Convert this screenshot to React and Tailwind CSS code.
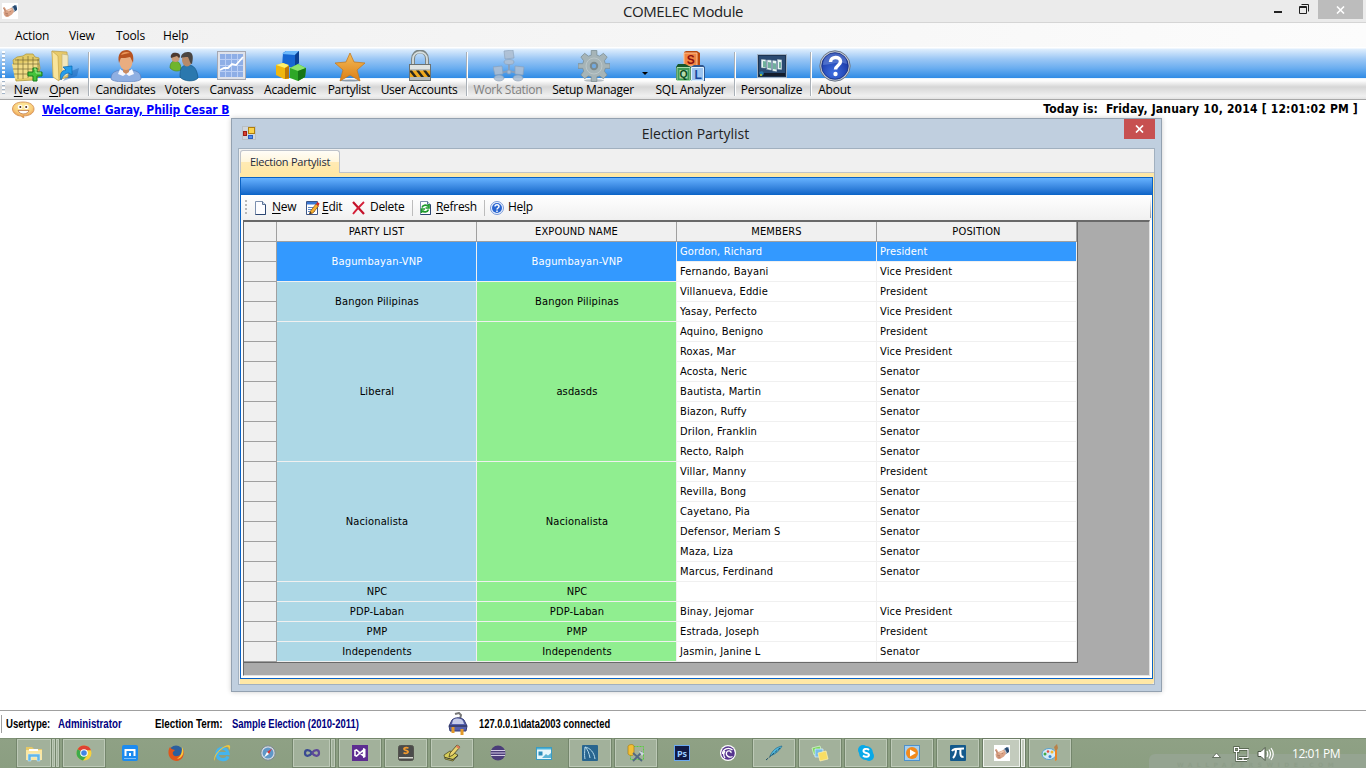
import React from "react";

const svg = (size, children, box = "0 0 32 32") => (
  <svg width={size} height={size} viewBox={box} className="block shrink-0">
    {children}
  </svg>
);

const HandIcon = ({ size = 16 }) =>
  svg(
    size,
    <>
      <rect width="16" height="16" fill="#fff" />
      <path d="M10 4l3-2 2 1 0 4-3 2-2-2z" fill="#27496f" />
      <path d="M13 2l2 1v2z" fill="#7fa3c4" />
      <path d="M9 5l2-1 2 4-2 2z" fill="#b9c6d4" />
      <path d="M1 4.500l1.500-.5L4.500 7 7 6l3-1.500 2 4-2 3-4 2.500H4l-2-2-.5-3 1-1z" fill="#dba487" />
      <path d="M1.500 5l2 3.500M3 10l3 .8M3.500 12l3 .3M6 7.500l3 1" stroke="#a36b54" fill="none" strokeWidth=".7" />
      <path d="M5 7.500l4-2 1 1-3 2z" fill="#f3cdb5" />
    </>,
    "0 0 16 16"
  );

const NewIcon = () =>
  svg(
    32,
    <>
      <path d="M2 10l4-3 6-1 3-2h7l2 3 4 1v4l1 6-2 9-4 3-18 1z" fill="#e2ca66" stroke="#b39a3c" strokeWidth=".8" />
      <path d="M1 14l27-3-2 16-22 2z" fill="#f1dc86" />
      <path d="M2 14h26M2 19h26M3 24h24M7 9v20M12 7v22M17 6v22M22 7v20M27 9v16M4 10h24" stroke="#756a35" strokeWidth=".7" />
      <path d="M22 18h4v4h5v4h-5v5h-4v-5h-5v-4h5z" fill="#45c33b" stroke="#177d1c" />
      <path d="M23 19h2v4h5" fill="none" stroke="#a4ee8f" />
    </>
  );

const OpenIcon = () =>
  svg(
    32,
    <>
      <path d="M20 22l10-4-2 8-14 5z" fill="#1860ae" opacity=".45" />
      <path d="M3 1l15 1 1 25-10 3-4-3z" fill="#e8ca69" stroke="#b99a43" strokeWidth=".7" />
      <path d="M13 4l6 1v20l-6 3z" fill="#f1e7bd" stroke="#b8ab75" strokeWidth=".6" />
      <path d="M3 1l6 5 1 25-6-4z" fill="#f8e49a" stroke="#c6a64c" strokeWidth=".7" />
      <path d="M12 30c-2-6 1-10 5-10l-3-3 9-1 0 9-3-2c-4 0-6 3-8 7z" fill="#249bea" stroke="#0967af" strokeWidth=".7" />
    </>
  );

const CandidateIcon = () =>
  svg(
    32,
    <>
      <path d="M1 29c0-6 3-8 10-9h10c7 1 10 3 10 9-2 4-28 4-30 0z" fill="#8fafe2" stroke="#5f80bb" strokeWidth=".7" />
      <path d="M10 19l6 4 6-4 2 5-5 2-3-2-3 2-5-2z" fill="#f6f8ff" />
      <path d="M13 18h6v4l-3 2-3-2z" fill="#c98a60" />
      <ellipse cx="16" cy="12" rx="6.500" ry="8" fill="#e9ad80" />
      <path d="M9 13c-2-9 2-13 8-13 6 1 7 6 6 13-1-2-2-5-3-6-3 1-7 1-9 1-1 1-1 3-2 5z" fill="#b75320" />
      <path d="M11 5c1-3 6-4 9-2-3 0-5 1-9 2z" fill="#ec995b" />
    </>
  );

const VotersIcon = () =>
  svg(
    32,
    <>
      <path d="M3 18c0-5 2-7 5-7 4 0 6 3 6 9-4 2-8 1-11-2z" fill="#6fb52e" stroke="#4a8718" strokeWidth=".6" />
      <circle cx="8.500" cy="8" r="4" fill="#c99b77" />
      <path d="M4 8c-1-4 2-6 6-5 3 0 4 4 2 5l-2-2c-2 1-4 1-6 2z" fill="#4c3a31" />
      <path d="M13 27c0-8 1-12 8-12 6 0 9 4 10 13-3 4-14 4-18-1z" fill="#2b78ae" stroke="#185985" strokeWidth=".7" />
      <ellipse cx="20" cy="10" rx="5" ry="6.500" fill="#b88a68" />
      <path d="M14 8c0-5 4-6 8-6 5 1 4 7 3 12-2 0-2-3-4-7-3 0-5 0-7 1z" fill="#4a4542" />
    </>
  );

const CanvassIcon = () =>
  svg(
    32,
    <>
      <rect x="1.500" y="1.500" width="28" height="28" fill="#dfe2ea" stroke="#a5a8b2" />
      <rect x="4" y="4" width="23" height="23" fill="#8eaee6" />
      <path d="M4 9.500h23M4 15.500h23M4 21.500h23M9.500 4v23M15.500 4v23M21.500 4v23" stroke="#b9cef5" />
      <path d="M4 20l4-2 4 0 4-4 4 1 7-8" fill="none" stroke="#fff" strokeWidth="1.800" />
    </>
  );

const AcademicIcon = () =>
  svg(
    32,
    <>
      <path d="M8 3l3-2h13v12l-4 4H7z" fill="#1767d2" />
      <path d="M7 4l4-3h13l-4 4z" fill="#6db9fb" />
      <path d="M20 5l4-4v12l-4 3z" fill="#0b4092" />
      <path d="M1 15l7-2 6 3v13H9l-8-4z" fill="#f0b70e" />
      <path d="M1 15l7-2 6 2-4 3z" fill="#fff06b" />
      <path d="M10 18l4-2v12l-4 1z" fill="#bd7906" />
      <path d="M15 18l8-4 8 4-1 9-7 4-8-3z" fill="#2ea727" />
      <path d="M15 18l8-4 8 4-8 3z" fill="#8be36c" />
      <path d="M23 21l8-3-1 9-7 4z" fill="#167516" />
    </>
  );

const StarIcon = () =>
  svg(
    32,
    <>
      <defs>
        <linearGradient id="star" x1="0" y1="0" x2="0" y2="1">
          <stop stopColor="#f3bc59" />
          <stop offset="1" stopColor="#dc7f15" />
        </linearGradient>
      </defs>
      <ellipse cx="16" cy="30.500" rx="10" ry="1" fill="#8d9cab" />
      <path d="M16 3l4 9 11 1-8 7 3 11-10-6-10 6 3-11-8-7 11-1z" fill="url(#star)" stroke="#c77b20" strokeLinejoin="round" strokeWidth=".8" />
    </>
  );

const LockIcon = () =>
  svg(
    32,
    <>
      <path d="M9 15V9c0-10 14-10 14 0v6" fill="none" stroke="#7b8585" strokeWidth="4" />
      <path d="M9 15V9c0-9 14-9 14 0v6" fill="none" stroke="#d5dddd" strokeWidth="1.800" />
      <rect x="5.500" y="14.500" width="21" height="16" fill="#b4baba" stroke="#6c7272" />
      <rect x="6" y="15" width="20" height="4" fill="#dfe3e1" />
      <rect x="6" y="20.500" width="20" height="6.500" fill="#f0a91c" />
      <path d="M6 20.500h2l5 6.500h-3l-4-5zM12 20.500h3l5 6.500h-3zM19 20.500h3l4 5V27h-2z" fill="#27271f" />
    </>
  );

const StationIcon = () =>
  svg(
    32,
    <g fill="#aebfd3" stroke="#8da0b8" strokeWidth=".7">
      <path d="M16 12v10M7 23l9-2 9 2" fill="none" strokeWidth="2" />
      <path d="M11 1l9-1 1 8-9 1z" />
      <ellipse cx="16" cy="12" rx="5" ry="2.500" />
      <path d="M0 17l9-1 1 8-8 1z" />
      <ellipse cx="6" cy="28" rx="5" ry="3" />
      <path d="M22 16l9 1-1 8-8-1z" />
      <ellipse cx="25" cy="28" rx="5" ry="3" />
      <circle cx="16" cy="22" r="2" />
    </g>
  );

const GearIcon = () =>
  svg(
    32,
    <>
      <ellipse cx="16" cy="30.500" rx="10" ry="1.300" fill="#8b98a2" opacity=".6" />
      <path
        d="M13 0h6v5l3 1 4-3 4 4-3 4 1 3h5v5h-5l-1 3 3 4-4 4-4-3-3 1v5h-6v-5l-3-1-4 3-4-4 3-4-1-3H-1v-5h5l1-3-3-4 4-4 4 3 3-1z"
        fill="#a6b4b7"
        stroke="#7b8c91"
        strokeWidth=".8"
        transform="translate(1 .5) scale(.94)"
      />
      <circle cx="16" cy="16" r="8" fill="none" stroke="#bcc7c9" />
      <circle cx="16" cy="16" r="3.200" fill="#72a9df" stroke="#7b898c" strokeWidth="2" />
    </>
  );

const SqlIcon = () =>
  svg(
    32,
    <>
      <path d="M9 2l2-1h11l3 2v13H9z" fill="#b9490d" />
      <path d="M9 3h13v13H9z" fill="#f08542" stroke="#ffc294" />
      <text x="15.500" y="13.500" fontFamily="Liberation Sans, sans-serif" fontWeight="bold" fontSize="12" textAnchor="middle" fill="#8c1010">S</text>
      <path d="M1 17l2-3h7l6 3v13H1z" fill="#17572a" />
      <path d="M2 17.500h13v13H2z" fill="#3f9a58" stroke="#a7dbab" />
      <rect x="4.500" y="20" width="8" height="8.500" fill="#b5dcae" />
      <text x="8.500" y="28" fontFamily="Liberation Sans, sans-serif" fontWeight="bold" fontSize="10.500" textAnchor="middle" fill="#0a4a20">Q</text>
      <path d="M16 17l3-2h9l2 2v14H16z" fill="#31588f" />
      <path d="M16.500 17.500h12v13h-12z" fill="#9cc4f0" stroke="#e0f2ff" />
      <text x="23" y="28.500" fontFamily="Liberation Sans, sans-serif" fontWeight="bold" fontSize="12" textAnchor="middle" fill="#174a9c">L</text>
    </>
  );

const PersonalizeIcon = () =>
  svg(
    32,
    <>
      <rect x="1" y="4" width="30" height="24" fill="#9fb0c3" />
      <rect x="2.500" y="5.500" width="27" height="21" fill="#2b4b72" stroke="#1c3452" />
      <path d="M3 23h26v3H3z" fill="#131c2b" />
      <path d="M5 9l6 .5v9L5 18zM10 9.500l6 .5v10.500l-6-1zM16 10l5 .5v11.500l-5-1zM21 9l5 .5v10.500l-5-.5z" fill="#e8f6f4" stroke="#2b4b72" strokeWidth=".6" />
      <path d="M7 11l3 .5v6l-3-.5zM12 12l3 .5v6l-3-.5zM17 13l3 .5v6l-3-.5zM23 12l2 .3v6l-2-.3z" fill="#6fb09c" />
      <circle cx="5.500" cy="23.500" r="2.200" fill="#267ab0" />
      <path d="M4 24h2v2H4z" fill="#9cb83c" />
    </>
  );

const AboutIcon = () =>
  svg(
    32,
    <>
      <defs>
        <radialGradient id="about" cx=".45" cy=".75" r=".8">
          <stop stopColor="#3f6fe0" />
          <stop offset="1" stopColor="#102a98" />
        </radialGradient>
      </defs>
      <circle cx="16" cy="16" r="15.200" fill="#c3c9d2" stroke="#6b7687" />
      <circle cx="16" cy="16" r="13.300" fill="url(#about)" stroke="#16307f" strokeWidth=".8" />
      <path d="M4 15c0-16 24-15 24-1-8-3-15 0-24 1z" fill="#7898e0" opacity=".5" />
      <path d="M11.500 12c0-6 10-6 10-.5 0 4-5 4-5 8" fill="none" stroke="#fff" strokeWidth="3.500" />
      <circle cx="16.500" cy="24" r="2.200" fill="#fff" />
    </>
  );

const Separator = ({ className }) => (
  <div className={`flex h-[47px] justify-center ${className}`}>
    <div className="mt-1 h-[44px] w-[2px] border-l border-[#a9b0b7] bg-white" />
  </div>
);

const ToolItem = ({ width, label, icon, access, disabled }) => (
  <div className={`flex shrink-0 flex-col items-center ${width}`}>
    <div className={`mt-[2px] ml-px h-8 ${disabled ? "opacity-90" : ""}`}>{icon}</div>
    <div
      className={`h-4 whitespace-nowrap text-[12px] leading-4 ${
        disabled ? "text-[#808080]" : "text-black"
      }`}
    >
      {access ? <span className="underline underline-offset-2">{label[0]}</span> : label[0]}
      {label.slice(1)}
    </div>
  </div>
);

const MainToolbar = () => (
  <div className="flex h-[53px] flex-col border-b border-[#a8a8a8] bg-white font-['Open_Sans',sans-serif] tracking-[-0.27px]">
    <div className="flex h-[52px] bg-[linear-gradient(180deg,#fff_0,#fff_1px,#dfeefd_2px,#9bc7f5_12px,#6caef0_21px,#308be5_31px,#dcecfd_31px,#fff_32px,#fbfbfb_34px,#d6d6d6_40px,#f0f0f0_49px,#e2e2e2_52px)]">
      <div className="flex w-[7px] justify-center pt-[4px]">
        <div className="h-11 w-[3px] bg-[repeating-linear-gradient(180deg,#fff_0,#fff_2px,#a2b4c8_2px,#a2b4c8_3px,transparent_3px,transparent_4px)]" />
      </div>
      <div className="flex pt-px">
        <ToolItem width="w-[38px]" label="New" access icon={<NewIcon />} />
        <ToolItem width="w-[38px]" label="Open" access icon={<OpenIcon />} />
        <Separator className="w-3" />
        <ToolItem width="w-[61px]" label="Candidates" icon={<CandidateIcon />} />
        <ToolItem width="w-[52px]" label="Voters" icon={<VotersIcon />} />
        <ToolItem width="w-[47px]" label="Canvass" icon={<CanvassIcon />} />
        <ToolItem width="w-[70px]" label="Academic" icon={<AcademicIcon />} />
        <ToolItem width="w-[48px]" label="Partylist" icon={<StarIcon />} />
        <ToolItem width="w-[92px]" label="User Accounts" icon={<LockIcon />} />
        <Separator className="w-1" />
        <ToolItem width="w-[78px]" label="Work Station" disabled icon={<StationIcon />} />
        <ToolItem width="w-[92px]" label="Setup Manager" icon={<GearIcon />} />
        <div className="flex w-3 justify-center pt-[24px]">
          <div className="h-0 w-0 border-x-[3px] border-t-[3px] border-x-transparent border-t-black" />
        </div>
        <ToolItem width="w-[79px]" label="SQL Analyzer" icon={<SqlIcon />} />
        <Separator className="w-[10px]" />
        <ToolItem width="w-[63px]" label="Personalize" icon={<PersonalizeIcon />} />
        <Separator className="w-4" />
        <ToolItem width="w-[31px]" label="About" icon={<AboutIcon />} />
      </div>
    </div>
  </div>
);

const TitleBar = () => (
  <div className="flex h-[23px] items-start border-b border-[#d5d5d5] bg-[#ebebeb]">
    <div className="w-[98px] pt-[3px] pl-[2px]">
      <HandIcon />
    </div>
    <div className="flex-1 text-center font-['Open_Sans',sans-serif] text-[15px] leading-[22px] tracking-[-0.38px] text-[#222]">
      COMELEC Module
    </div>
    <div className="flex w-[98px]">
      <div className="mt-[11px] ml-[6px] h-[2px] w-2 bg-[#222]" />
      <svg width="11" height="11" className="mt-1 ml-[17px]">
        <path d="M.5 2.500h7v7h-7zM0 3.500h8M2.500 .5h7v7" fill="none" stroke="#222" />
      </svg>
      <div className="ml-[8px] flex h-[19px] w-[45px] items-center justify-center bg-[#bcbcbc]">
        <svg width="9" height="8">
          <path d="M1 .5l7 7M8 .5l-7 7" stroke="#fff" strokeWidth="1.600" />
        </svg>
      </div>
    </div>
  </div>
);

const MenuBar = () => (
  <div className="flex h-6 items-center bg-linear-to-r from-[#f0f0f0] to-[#fcfcfc] pt-[2px] pl-[15px] font-['Open_Sans',sans-serif] text-[12px] tracking-[-0.15px] text-black">
    <div className="w-[54px]">Action</div>
    <div className="w-[47px]">View</div>
    <div className="w-[47px]">Tools</div>
    <div>Help</div>
  </div>
);

const SmileyIcon = () => (
  <svg width="23" height="18" viewBox="0 0 23 18" className="block">
    <defs>
      <radialGradient id="smile" cx=".5" cy=".3" r=".7">
        <stop stopColor="#fff0a6" />
        <stop offset=".6" stopColor="#f9cf7c" />
        <stop offset="1" stopColor="#e8924c" />
      </radialGradient>
    </defs>
    <path d="M11 2C4 2 .5 5 .5 9c0 4 4.500 7 8.500 7 0 0 1 1.500 3 1.500l-1-1.500c7 0 11-3 11-7C22 5 18 2 11 2z" fill="url(#smile)" stroke="#cf8a4c" strokeWidth=".8" />
    <circle cx="8" cy="7" r="2.300" fill="#fff" />
    <circle cx="14.500" cy="7" r="2.300" fill="#fff" />
    <circle cx="8.300" cy="7" r="1" fill="#4a2b1a" />
    <circle cx="14.200" cy="7" r="1" fill="#4a2b1a" />
    <path d="M6 10.500h11c-1 4-9 5-11 0z" fill="#fff" stroke="#b5683a" strokeWidth=".7" />
  </svg>
);

const FormIcon = () => (
  <svg width="14" height="14" className="block">
    <rect x=".5" y=".5" width="13" height="13" fill="#cfd6dc" stroke="#b9bfc5" />
    <rect x="1.500" y="5.500" width="3" height="4" fill="#d8402e" stroke="#9c1d14" />
    <rect x="6.500" y="1.500" width="6" height="6" fill="#fbd34c" stroke="#b07f0d" />
    <rect x="6.500" y="9.500" width="4" height="3" fill="#4d8df0" stroke="#2b5fc0" />
  </svg>
);

const PageIcon = ({ children }) => (
  <svg width="15" height="16" viewBox="0 0 15 16" className="block shrink-0">
    <path d="M2.500 1.500h7l3 3v10h-10z" fill="#fdfdff" stroke="#7b8fae" />
    <path d="M12.500 4.500v10h-10" fill="none" stroke="#2c4672" />
    <path d="M9.500 1.500v3h3" fill="#cdd9ea" stroke="#5c7396" />
    {children}
  </svg>
);

const EditIcon = () => (
  <svg width="15" height="16" viewBox="0 0 15 16" className="block">
    <path d="M1.500 1.500h11v13h-11z" fill="#fff" stroke="#3c5688" />
    <path d="M2 2h10v2.500H2z" fill="#3a77d2" />
    <path d="M3 7.500h6M3 9.500h4M3 11.500h7" stroke="#5b86c4" />
    <path d="M5.500 11l5.500-7 2.500 2-5.500 7-3.500 1z" fill="#f6b030" stroke="#8a4d12" strokeWidth=".7" />
    <path d="M5 12l2 1-2.500 1z" fill="#222" />
    <path d="M11 4l1.500-2 2 1.500-1 2.500z" fill="#d52b24" />
  </svg>
);

const RefreshIcon = () => (
  <PageIcon>
    <path d="M4 7.500c1-3 5-3 6-1M11 4v4H7.500M10.500 9.500c-1 3-5 3-6 1M3.500 13V9H7" fill="none" stroke="#1c9a2b" strokeWidth="1.700" />
  </PageIcon>
);

const DialogTool = ({ width, icon, before = "", letter, after, gap }) => (
  <div className={`flex items-center ${width}`}>
    {icon}
    <span className={`-mt-px whitespace-nowrap ${gap}`}>
      {before}
      {letter && <span className="underline underline-offset-2">{letter}</span>}
      {after}
    </span>
  </div>
);

const DialogToolbar = () => (
  <div className="flex h-[25px] items-center bg-linear-to-b from-white to-[#f0f0f0] pl-[4px] font-['Open_Sans',sans-serif] text-[12px] tracking-[-0.3px] text-black">
    <div className="mr-[6px] h-4 w-[2px] bg-[repeating-linear-gradient(180deg,#b8b8b8_0,#b8b8b8_2px,transparent_2px,transparent_4px)]" />
    <DialogTool width="w-[52px]" icon={<PageIcon />} letter="N" after="ew" gap="ml-[4px]" />
    <DialogTool width="w-[47px]" icon={<EditIcon />} letter="E" after="dit" gap="ml-[2px]" />
    <DialogTool
      width="w-[60px]"
      gap="ml-[5px]"
      after="Delete"
      icon={
        <svg width="13" height="14" className="block">
          <path d="M1 1l11 12" stroke="#c41129" strokeWidth="2.200" />
          <path d="M12 1C8 5 4 9 1 13" fill="none" stroke="#d41f38" strokeWidth="1.800" />
        </svg>
      }
    />
    <div className="mr-[5px] h-4 w-px bg-[#bcbcbc]" />
    <DialogTool width="w-[65px]" icon={<RefreshIcon />} letter="R" after="efresh" gap="ml-[3px]" />
    <div className="ml-px mr-[5px] h-4 w-px bg-[#bcbcbc]" />
    <DialogTool
      width="w-[50px]"
      gap="ml-[4px]"
      before="He"
      letter="l"
      after="p"
      icon={
        <svg width="14" height="14" viewBox="0 0 14 14" className="block">
          <circle cx="7" cy="7" r="6.500" fill="#eef4ff" stroke="#7999d6" />
          <circle cx="7" cy="7" r="5" fill="#2a66d0" />
          <path d="M5 5.500c0-2.500 4-2.500 4 0 0 1.500-2 1.500-2 3M7 9.500V11" fill="none" stroke="#fff" strokeWidth="1.500" />
        </svg>
      }
    />
    <div className="mr-px ml-auto h-[21px] w-px bg-linear-to-b from-white to-[#9a9a9a]" />
  </div>
);

const parties = [
  { name: "Bagumbayan-VNP", expound: "Bagumbayan-VNP", span: "row-span-2", selected: true, members: [["Gordon, Richard", "President"], ["Fernando, Bayani", "Vice President"]] },
  { name: "Bangon Pilipinas", expound: "Bangon Pilipinas", span: "row-span-2", members: [["Villanueva, Eddie", "President"], ["Yasay, Perfecto", "Vice President"]] },
  {
    name: "Liberal",
    expound: "asdasds",
    span: "row-span-7",
    members: [
      ["Aquino, Benigno", "President"],
      ["Roxas, Mar", "Vice President"],
      ["Acosta, Neric", "Senator"],
      ["Bautista, Martin", "Senator"],
      ["Biazon, Ruffy", "Senator"],
      ["Drilon, Franklin", "Senator"],
      ["Recto, Ralph", "Senator"],
    ],
  },
  {
    name: "Nacionalista",
    expound: "Nacionalista",
    span: "row-span-6",
    members: [
      ["Villar, Manny", "President"],
      ["Revilla, Bong", "Senator"],
      ["Cayetano, Pia", "Senator"],
      ["Defensor, Meriam S", "Senator"],
      ["Maza, Liza", "Senator"],
      ["Marcus, Ferdinand", "Senator"],
    ],
  },
  { name: "NPC", expound: "NPC", span: "row-span-1", members: [["", ""]] },
  { name: "PDP-Laban", expound: "PDP-Laban", span: "row-span-1", members: [["Binay, Jejomar", "Vice President"]] },
  { name: "PMP", expound: "PMP", span: "row-span-1", members: [["Estrada, Joseph", "President"]] },
  { name: "Independents", expound: "Independents", span: "row-span-1", members: [["Jasmin, Janine L", "Senator"]] },
];

const PartyRows = ({ party }) =>
  party.members.map(([member, position], i) => {
    const active = party.selected && i === 0;
    const cell = active ? "bg-[#3399ff] text-white" : "bg-white text-black";
    return (
      <React.Fragment key={i}>
        <div className="border-r border-b border-[#a0a0a0] bg-[#f0f0f0]" />
        {i === 0 && (
          <>
            <div className={`flex items-center justify-center border-r border-b border-[#f0f0f0] pt-px pl-px leading-[18px] ${party.span} ${party.selected ? "bg-[#3399ff] text-white" : "bg-[#add8e6] text-black"}`}>
              {party.name}
            </div>
            <div className={`flex items-center justify-center border-r border-b border-[#f0f0f0] pt-px pl-px leading-[18px] ${party.span} ${party.selected ? "bg-[#3399ff] text-white" : "bg-[#90ee90] text-black"}`}>
              {party.expound}
            </div>
          </>
        )}
        <div className={`border-r border-b border-[#f0f0f0] pl-[3px] leading-[19px] ${cell}`}>{member}</div>
        <div className={`border-r border-b border-[#f0f0f0] pl-[3px] leading-[19px] ${cell}`}>{position}</div>
      </React.Fragment>
    );
  });

const PartyGrid = () => (
  <div className="mx-[2px] mb-[2px] flex-1 border-t-2 border-l border-r border-b border-t-[#696969] border-l-[#696969] border-r-[#e3e3e3] border-b-[#e3e3e3] bg-[#ababab]">
    <div className="grid w-[834px] auto-rows-[20px] grid-cols-[33px_repeat(4,200px)] border-r border-b border-[#696969] font-['DejaVu_Sans_Condensed','DejaVu_Sans',sans-serif] text-[11px] tracking-[0.15px] [font-stretch:condensed]">
      <div className="border-r border-b border-[#a0a0a0] bg-[#f0f0f0]" />
      {["PARTY LIST", "EXPOUND NAME", "MEMBERS", "POSITION"].map((h) => (
        <div key={h} className="border-r border-b border-[#a0a0a0] bg-[#f0f0f0] text-center leading-[19px]">
          {h}
        </div>
      ))}
      {parties.map((p) => (
        <PartyRows key={p.name} party={p} />
      ))}
    </div>
  </div>
);

const Dialog = () => (
  <div className="ml-[231px] flex h-[574px] w-[931px] flex-col border border-[#93a1b0] bg-[#c0cfdf] px-[6px] pb-[6px] shadow-[0_0_5px_rgba(0,0,0,0.2)]">
    <div className="flex h-[29px]">
      <div className="w-[60px] pt-[7px] pl-[4px]">
        <FormIcon />
      </div>
      <div className="flex-1 pr-[31px] text-center font-['Open_Sans',sans-serif] text-[14px] leading-[29px] tracking-[-0.02px] text-[#222]">
        Election Partylist
      </div>
      <div className="flex h-5 w-[31px] items-center justify-center bg-[#c75050]">
        <svg width="9" height="8">
          <path d="M1 .5l7 7M8 .5l-7 7" stroke="#fff" strokeWidth="1.700" />
        </svg>
      </div>
    </div>
    <div className="flex min-h-0 flex-1 flex-col border border-[#a1b0bf] bg-[#f0f0f0] pl-px">
      <div className="flex h-6 items-end border-b border-[#bfc3ca]">
        <div className="-mb-px h-[23px] w-[100px] rounded-t-[3px] border border-b-0 border-[#bfc3ca] bg-[linear-gradient(180deg,#fffdf7_0,#fff6dc_50%,#ffeab4_51%,#ffe8a6_100%)] text-center font-['Open_Sans',sans-serif] text-[11px] leading-[22px] tracking-[-0.25px] text-[#1e2a3c]">
          Election Partylist
        </div>
      </div>
      <div className="flex min-h-0 flex-1 flex-col rounded-br-[3px] bg-[#ffe8a6] pt-[4px] pr-px pb-[5px]">
        <div className="flex min-h-0 flex-1 flex-col border border-[#0a62c4] bg-white">
          <div className="h-[17px] shrink-0 bg-linear-to-b from-[#66b2ff] to-[#0963c6]" />
          <DialogToolbar />
          <PartyGrid />
        </div>
      </div>
    </div>
  </div>
);

const RobotIcon = () => (
  <svg width="20" height="24" viewBox="0 0 20 24" className="block">
    <path d="M7 2l4-1 2 2-1 4" fill="none" stroke="#777" strokeWidth="2" />
    <path d="M4 8c3-3 9-3 12 0l3 6-1 5H2l-1-5z" fill="#5560ad" stroke="#343b73" />
    <path d="M5 8c3-2 8-2 10 1l1 3H4z" fill="#c6cce9" />
    <path d="M1 14h18" stroke="#303765" strokeWidth="1.500" />
    <path d="M5 15v6M14 17v6" stroke="#e39a28" strokeWidth="3" />
  </svg>
);

const StatusBar = () => (
  <div className="flex h-7 items-center border-t border-[#a0a0a0] bg-white pb-px font-['Liberation_Sans',sans-serif] text-[12px] font-bold whitespace-nowrap text-black">
    <div className="-mr-px ml-px h-[18px] w-[6px] border-l border-[#a0a0a0]" />
    <div className="w-[52px]">
      <div className="origin-left scale-x-[0.8]">Usertype:</div>
    </div>
    <div className="w-[97px] text-[#000080]">
      <div className="origin-left scale-x-[0.81]">Administrator</div>
    </div>
    <div className="w-[77px]">
      <div className="origin-left scale-x-[0.82]">Election Term:</div>
    </div>
    <div className="w-[216px] text-[#000080]">
      <div className="origin-left scale-x-[0.79]">Sample Election (2010-2011)</div>
    </div>
    <div className="w-[31px]">
      <RobotIcon />
    </div>
    <div className="w-[140px]">
      <div className="origin-left scale-x-[0.78]">127.0.0.1\data2003 connected</div>
    </div>
  </div>
);

const B = ({ children }) => svg(18, children, "0 0 18 18");

const taskIcons = {
  explorer: (
    <B>
      <path d="M1 3h6l2 2h8v11H1z" fill="#e5c968" />
      <path d="M1 6h16v10H1z" fill="#fae6a0" />
      <path d="M4 5h9v2H4z" fill="#fff" />
      <path d="M3 17v-7h12v7h-3v-4H6v4z" fill="#63b6e8" stroke="#d9f1ff" strokeWidth=".5" />
    </B>
  ),
  chrome: (
    <B>
      <circle cx="9" cy="9" r="7.500" fill="#f7d23c" />
      <path d="M9 9L2.500 5.200a7.500 7.500 0 0 1 13.500 1H9z" fill="#df4134" />
      <path d="M9 9L2.500 5.200a7.500 7.500 0 0 0 5.500 11.200l4-5z" fill="#3daa4b" />
      <circle cx="9" cy="9" r="3.800" fill="#fff" />
      <circle cx="9" cy="9" r="2.800" fill="#4285e4" />
    </B>
  ),
  maxthon: (
    <B>
      <rect x="1" y="1" width="16" height="16" rx="2" fill="#1c8bef" />
      <path d="M4.500 12V6h9v6M9 12V9" fill="none" stroke="#fff" strokeWidth="2" />
      <path d="M3 14.500h12" stroke="#7dc0fb" />
    </B>
  ),
  firefox: (
    <B>
      <circle cx="9" cy="8.500" r="7" fill="#2c5f9e" />
      <path d="M3 3C0 7 1 16 9 17c7 0 9-7 7-12-1 5-3 7-6 7-3 1-5-2-4-4l2-2C5 5 4 5 3 3z" fill="#e0561b" />
      <path d="M15 3c3 5 1 11-5 12 4-3 5-6 5-12z" fill="#fbc93c" />
    </B>
  ),
  ie: (
    <B>
      <path d="M15 12.500c-2 5-11 4-11-3s10-7 11 0H5" fill="none" stroke="#45b4ee" strokeWidth="3.200" />
      <path d="M2 17C-2 12 10 1 16 1c2 1 1 4 0 5 0-3-1-4-3-3C8 4 1 12 2 17z" fill="#f1c63c" />
    </B>
  ),
  safari: (
    <B>
      <circle cx="9" cy="9" r="7.200" fill="#d5dce2" stroke="#7c8993" />
      <circle cx="9" cy="9" r="5.500" fill="#5f97c8" />
      <path d="M13 4.500l-3 5.500-2-2z" fill="#d33" />
      <path d="M5 13.500l3-5.500 2 2z" fill="#fff" />
    </B>
  ),
  infinity: (
    <B>
      <path d="M9 9C6 5 2 5.500 2 9s4 4 7 0" fill="none" stroke="#3a4a92" strokeWidth="2.200" />
      <path d="M9 9c3-4 7-3.500 7 0s-4 4-7 0" fill="none" stroke="#5c4898" strokeWidth="2.200" />
    </B>
  ),
  vs: (
    <B>
      <rect x="1" y="1" width="16" height="16" fill="#5d2d91" />
      <path d="M4 6.500l1.500-.5 7 6V6l-7 6L4 11.500z" fill="none" stroke="#fff" strokeWidth="1.600" />
      <path d="M12 4l2.500 1v8L12 14z" fill="#fff" />
    </B>
  ),
  sublime: (
    <B>
      <rect x="1.500" y="1.500" width="15" height="15" rx="2" fill="#4b4b4b" stroke="#55554f" />
      <path d="M2 13h14v1.500H2z" fill="#d8d8d0" />
      <path d="M11.500 4c-4.500-1-5.500 1-3.500 2l2.500 1c2 1.500-1.500 3-4 1.800" fill="none" stroke="#f29a2e" strokeWidth="1.700" />
    </B>
  ),
  notes: (
    <B>
      <path d="M1 11l6-4 8 4-5 6-8-2z" fill="#d7ce58" stroke="#4d4b25" strokeWidth=".8" />
      <path d="M2 13.500l8 2 5-4" fill="none" stroke="#333" />
      <path d="M6 13l1-4 7-8 3 2-7 8z" fill="#e9d46f" stroke="#43401c" strokeWidth=".8" />
      <path d="M14 1l3 2-1 2-3-2z" fill="#dd7b5c" />
    </B>
  ),
  eclipse: (
    <B>
      <circle cx="9" cy="9" r="7.500" fill="#4b3d79" />
      <path d="M2 6.500h14M1.500 9h15M2 11.500h14" stroke="#d4cbe4" />
    </B>
  ),
  card: (
    <B>
      <rect x="1.500" y="3.500" width="15" height="12" fill="#e7f6fb" stroke="#3b9cc3" />
      <path d="M2 4h14v1.500H2z" fill="#4db4d9" />
      <path d="M3.500 7.500h4v4h-4z" fill="#2c8dbb" />
      <path d="M7 14l4-4 2 1.500L16 9v5z" fill="#5db4d6" />
    </B>
  ),
  mysql: (
    <B>
      <rect x="1" y="1" width="16" height="16" rx="1" fill="#28658f" />
      <path d="M4 15C3 10 4 5 4 3c5 1 9 5 10 12M4 3c3 3 4 6 5 11" fill="none" stroke="#b7dbec" />
    </B>
  ),
  dbtools: (
    <B>
      <rect x="3.500" y="2.500" width="13" height="13" fill="none" stroke="#55cf3a" strokeDasharray="2 1" />
      <path d="M1 2c2-2 5-2 6 0v8c-1 2-4 2-6 0z" fill="#f2bf35" stroke="#a77c17" strokeWidth=".7" />
      <path d="M6 9l9 8M15 8l-9 9" stroke="#536a82" strokeWidth="1.800" />
      <path d="M12 7l5 2-2 3z" fill="#cfd8e0" />
    </B>
  ),
  ps: (
    <B>
      <rect x="1.500" y="1.500" width="15" height="15" fill="#101945" stroke="#6aa8f0" />
      <text x="9" y="12.500" fontFamily="Open Sans, sans-serif" fontSize="9" fontWeight="bold" textAnchor="middle" fill="#9accff">Ps</text>
    </B>
  ),
  bittorrent: (
    <B>
      <circle cx="9" cy="9" r="8" fill="#fff" />
      <circle cx="9" cy="9" r="6.800" fill="#56358e" />
      <path d="M13.500 12.500c-3 2-7-1-6-4 1-2.500 5-2 4.500.500M3.500 10c0-5 6-7.500 10-4M6 14c-1.500-2-1.500-5 0-7" fill="none" stroke="#fff" strokeWidth="1.300" />
    </B>
  ),
  feather: (
    <B>
      <path d="M5 12C7 7 11 3 17 2c-2 4-6 8-12 10z" fill="#50b8dc" stroke="#286d8d" strokeWidth=".7" />
      <path d="M1 16L15 4" stroke="#1e516b" strokeDasharray="3 1" />
    </B>
  ),
  sticky: (
    <B>
      <path d="M1 4l8-2 2 7-8 2z" fill="#7bd55b" stroke="#e0ffd8" strokeWidth=".7" />
      <path d="M4 5h8v8H4z" fill="#78bdea" stroke="#dff3ff" strokeWidth=".7" />
      <path d="M7 9l8-2 2 8-8 2z" fill="#f9de63" stroke="#fff2b1" strokeWidth=".7" />
    </B>
  ),
  skype: (
    <B>
      <circle cx="6" cy="6" r="5" fill="#08a9e8" />
      <circle cx="12" cy="12" r="5" fill="#08a9e8" />
      <circle cx="9" cy="9" r="7" fill="#08a9e8" />
      <path d="M12 6C10 4 6 5 6.500 7c0 2.500 5.500 1.500 5.500 4 0 2-4 2.500-6 .5" fill="none" stroke="#fff" strokeWidth="1.900" />
    </B>
  ),
  wmp: (
    <B>
      <rect x="1.500" y="1.500" width="15" height="15" fill="#a5cff0" stroke="#4d91cb" />
      <circle cx="9" cy="9" r="6" fill="#f28a1c" />
      <path d="M7 5.500l6 3.500-6 3.500z" fill="#fff" />
    </B>
  ),
  pi: (
    <B>
      <rect x="1" y="1" width="16" height="16" rx="1" fill="#13598c" />
      <path d="M3 7c1-2 3-2.500 12-2.500M7 5c0 4-1 7-3 9M11.500 5c-.5 5 0 9 3 7.500" fill="none" stroke="#fff" strokeWidth="2" />
    </B>
  ),
  hand: <HandIcon />,
  paint: (
    <B>
      <ellipse cx="8" cy="10" rx="7" ry="5.500" fill="#d5ebf8" stroke="#5aa2ce" />
      <circle cx="4" cy="10" r="1.500" fill="#40a948" />
      <circle cx="7" cy="7.500" r="1.300" fill="#e64d3d" />
      <circle cx="11" cy="8" r="1.500" fill="#f2b72f" />
      <circle cx="9" cy="12.500" r="1.500" fill="#3b87d0" />
      <path d="M14 6h2v10l-2 1z" fill="#ed8425" />
      <path d="M13 3l3-3 1 4-1 2h-2z" fill="#b98149" />
    </B>
  ),
};

const tasks = [
  ["explorer", "triple"], ["chrome", "open"], ["maxthon"], ["firefox"], ["ie"], ["safari"],
  ["infinity", "stack"], ["vs", "open"], ["sublime", "open"], ["notes", "open"], ["eclipse"], ["card"],
  ["mysql", "open"], ["dbtools", "open"], ["ps"], ["bittorrent"], ["feather", "open"], ["sticky", "open"],
  ["skype", "open"], ["wmp", "open"], ["pi", "open"], ["hand", "active"], ["paint", "open"],
];

const TaskButton = ({ icon, state }) => {
  if (!state) return <div className="flex w-11 items-center justify-center">{taskIcons[icon]}</div>;
  const width = { open: "w-11", stack: "w-[39px]", active: "w-[39px]", triple: "w-[36px]" }[state];
  const extras = { open: 0, stack: 1, active: 1, triple: 2 }[state];
  const face =
    state === "active"
      ? "border border-[#6d7d66] bg-[#c3cbbd] shadow-[inset_0_0_0_1px_#eef2ec]"
      : "border border-[#74866c] bg-[#a2b19b] shadow-[inset_0_0_0_1px_#bdc9b7]";
  const edge = extras === 2 ? "w-[4px] border-l-0" : "w-[5px] border-l-0";
  return (
    <div className="flex w-11">
      <div className={`flex items-center justify-center ${width} ${face}`}>{taskIcons[icon]}</div>
      {Array.from({ length: extras }, (_, i) => (
        <div key={i} className={`${face} ${edge}`} />
      ))}
    </div>
  );
};

const Taskbar = () => (
  <div className="relative flex h-[30px] bg-linear-to-b from-[#8fa185] to-[#8b9e81] shadow-[inset_0_1px_0_#7f9176]">
    <div className="flex gap-[2px] pl-4">
      {tasks.map(([icon, state]) => (
        <TaskButton key={icon} icon={icon} state={state} />
      ))}
    </div>
    <div className="mt-4 ml-[77px] flex h-[14px] w-[217px] shrink-0 items-end justify-center overflow-hidden rounded-tl-[6px] bg-[#95a491] font-['DejaVu_Sans',sans-serif] text-[6px] leading-[6px] font-bold tracking-[4.500px] whitespace-nowrap text-[#8e9e8a]">
      WALLPAPERSWIDE.COM
    </div>
    <div className="absolute top-0 left-[1212px] flex h-[30px] items-center text-white">
      <svg width="9" height="6" className="mt-[3px] block">
        <path d="M.5 5.500h8L4.500 1z" fill="#fff" stroke="#4f5c4a" strokeWidth=".8" />
      </svg>
      <svg width="16" height="16" className="mt-[2px] ml-[12px] block">
        <path d="M6 3.500h9v8H6M10 12v2M6 14.500h8M3.500 6v8.500H6M1.500 1.500h4v4h-4z" fill="none" stroke="#4c5946" strokeWidth="2.400" />
        <path d="M6 3.500h9v8H6M10 12v2M6 14.500h8M3.500 6v8.500H6M1.500 1.500h4v4h-4z" fill="none" stroke="#fff" strokeWidth="1.200" />
      </svg>
      <svg width="17" height="16" className="mt-[2px] ml-[8px] block">
        <path d="M1 5.500h3l4-4v13l-4-4H1z" fill="#fff" stroke="#4a5545" />
        <path d="M10 5c1 2 1 4 0 6M12 3.500c2 3 2 6 0 9M14 2c3 4 3 8 0 12" fill="none" stroke="#fff" strokeWidth="1.200" />
      </svg>
      <div className="mt-px ml-[18px] font-['Open_Sans',sans-serif] text-[12px] leading-[14px] tracking-[-0.45px] whitespace-nowrap">12:01 PM</div>
    </div>
  </div>
);

export default function App() {
  return (
    <div className="flex h-[768px] w-[1366px] flex-col overflow-hidden bg-white">
      <TitleBar />
      <MenuBar />
      <MainToolbar />
      <div className="flex min-h-0 flex-1 flex-col">
        <div className="flex h-[18px] shrink-0 justify-between pr-[8px] pl-[12px] font-['DejaVu_Sans_Condensed','DejaVu_Sans',sans-serif] text-[12px] leading-[19px] font-bold [font-stretch:condensed]">
          <div className="flex gap-[7px]">
            <SmileyIcon />
            <a className="pt-px tracking-[-0.1px] text-[#0000ff] underline">Welcome! Garay, Philip Cesar B</a>
          </div>
          <div className="tracking-[0.19px] whitespace-pre text-black">Today is:  Friday, January 10, 2014 [ 12:01:02 PM ]</div>
        </div>
        <Dialog />
      </div>
      <StatusBar />
      <Taskbar />
    </div>
  );
}
